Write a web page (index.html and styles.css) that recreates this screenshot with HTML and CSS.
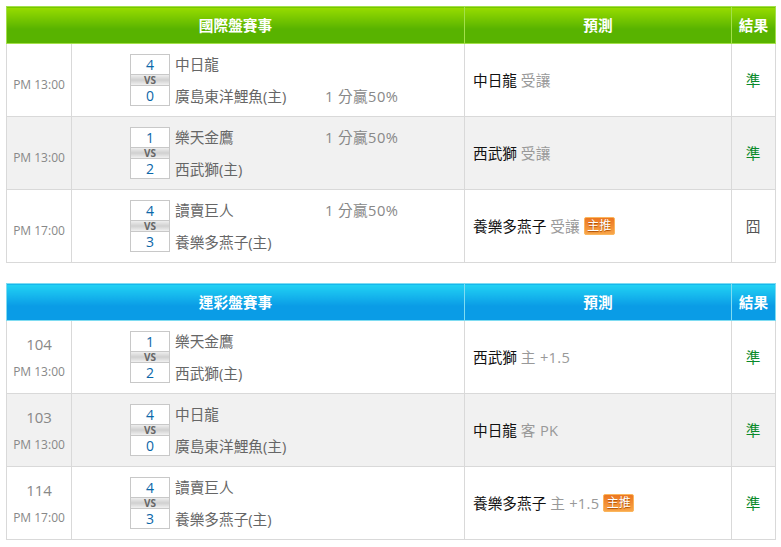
FILE: index.html
```html
<!DOCTYPE html>
<html lang="zh-Hant">
<head>
<meta charset="utf-8">
<title>賽事預測</title>
<link rel="stylesheet" href="styles.css">
</head>
<body>
<table class="board green">
<colgroup><col class="c-time"><col class="c-match"><col class="c-pick"><col class="c-result"></colgroup>
<thead><tr><th colspan="2">國際盤賽事</th><th>預測</th><th>結果</th></tr></thead>
<tbody>
<tr>
<td class="time"><div class="clock">PM 13:00</div></td>
<td><div class="match"><div class="score"><span class="num">4</span><span class="vs">VS</span><span class="num">0</span></div>
<div class="teams"><div class="team"><span class="name">中日龍</span></div><div class="team"><span class="name">廣島東洋鯉魚(主)</span><span class="odds">1 分贏50%</span></div></div></div></td>
<td class="pick"><b>中日龍</b> <i>受讓</i></td>
<td class="res ok">準</td>
</tr>
<tr class="alt">
<td class="time"><div class="clock">PM 13:00</div></td>
<td><div class="match"><div class="score"><span class="num">1</span><span class="vs">VS</span><span class="num">2</span></div>
<div class="teams"><div class="team"><span class="name">樂天金鷹</span><span class="odds">1 分贏50%</span></div><div class="team"><span class="name">西武獅(主)</span></div></div></div></td>
<td class="pick"><b>西武獅</b> <i>受讓</i></td>
<td class="res ok">準</td>
</tr>
<tr>
<td class="time"><div class="clock">PM 17:00</div></td>
<td><div class="match"><div class="score"><span class="num">4</span><span class="vs">VS</span><span class="num">3</span></div>
<div class="teams"><div class="team"><span class="name">讀賣巨人</span><span class="odds">1 分贏50%</span></div><div class="team"><span class="name">養樂多燕子(主)</span></div></div></div></td>
<td class="pick"><b>養樂多燕子</b> <i>受讓</i> <span class="tag">主推</span></td>
<td class="res">囧</td>
</tr>
</tbody>
</table>
<table class="board blue">
<colgroup><col class="c-time"><col class="c-match"><col class="c-pick"><col class="c-result"></colgroup>
<thead><tr><th colspan="2">運彩盤賽事</th><th>預測</th><th>結果</th></tr></thead>
<tbody>
<tr>
<td class="time"><div class="no">104</div><div class="clock">PM 13:00</div></td>
<td><div class="match"><div class="score"><span class="num">1</span><span class="vs">VS</span><span class="num">2</span></div>
<div class="teams"><div class="team"><span class="name">樂天金鷹</span></div><div class="team"><span class="name">西武獅(主)</span></div></div></div></td>
<td class="pick"><b>西武獅</b> <i>主 +1.5</i></td>
<td class="res ok">準</td>
</tr>
<tr class="alt">
<td class="time"><div class="no">103</div><div class="clock">PM 13:00</div></td>
<td><div class="match"><div class="score"><span class="num">4</span><span class="vs">VS</span><span class="num">0</span></div>
<div class="teams"><div class="team"><span class="name">中日龍</span></div><div class="team"><span class="name">廣島東洋鯉魚(主)</span></div></div></div></td>
<td class="pick"><b>中日龍</b> <i>客 PK</i></td>
<td class="res ok">準</td>
</tr>
<tr>
<td class="time"><div class="no">114</div><div class="clock">PM 17:00</div></td>
<td><div class="match"><div class="score"><span class="num">4</span><span class="vs">VS</span><span class="num">3</span></div>
<div class="teams"><div class="team"><span class="name">讀賣巨人</span></div><div class="team"><span class="name">養樂多燕子(主)</span></div></div></div></td>
<td class="pick"><b>養樂多燕子</b> <i>主 +1.5</i> <span class="tag">主推</span></td>
<td class="res ok">準</td>
</tr>
</tbody>
</table>
</body>
</html>
```
FILE: styles.css
```css
html, body { margin: 0; padding: 0; background: #fff; }
body {
  padding: 6px 6px 0 6px;
  font-family: "Open Sans", "Noto Sans CJK TC", sans-serif;
  font-size: 14.67px;
  color: #666;
}
.board {
  width: 769px;
  border-collapse: collapse;
  table-layout: fixed;
  margin-bottom: 20px;
}
.c-time { width: 65px; }
.c-match { width: 393px; }
.c-pick { width: 267px; }
.c-result { width: 44px; }
.board th, .board td { box-sizing: border-box; }
.board th {
  height: 37px;
  padding: 0 0 2px;
  color: #fff;
  font-size: 14.67px;
  font-weight: bold;
  font-family: "Noto Sans CJK TC", sans-serif;
  text-align: center;
}
.green th {
  background: linear-gradient(#98dc00, #58b300 60%);
  border: 1px solid #a3e04a;
}
.blue th {
  background: linear-gradient(#22d3f4, #0a9ce6 60%);
  border: 1px solid #7fdcf2;
}
.board td {
  height: 73px;
  padding: 0;
  border: 1px solid #d9d9d9;
  vertical-align: middle;
}
.alt td { background: #f1f1f1; }
.time { text-align: center; color: #888; }
.clock { font-size: 12px; line-height: 16px; margin-top: 10px; }
.no { font-size: 15px; line-height: 20px; }
.match { display: flex; padding-left: 58px; gap: 5px; align-items: center; }
.score {
  display: flex;
  flex-direction: column;
  width: 38px;
  border: 1px solid #c8c8c8;
  background: #fff;
  text-align: center;
}
.num {
  box-sizing: border-box;
  height: 19px;
  padding-top: 1px;
  line-height: 18px;
  color: #0b66a8;
  font-size: 14px;
}
.vs {
  height: 10px;
  line-height: 10px;
  font-size: 10px;
  font-weight: bold;
  color: #666;
  background: linear-gradient(#eee, #d0d0d0 50%, #f0f0f0);
  border-top: 1px solid #c8c8c8;
  border-bottom: 1px solid #c8c8c8;
}
.teams { display: flex; flex-direction: column; gap: 12px; }
.team { display: flex; height: 20px; line-height: 20px; }
.name { width: 150px; }
.odds { color: #888; letter-spacing: 0.4px; }
.pick { padding-left: 8px !important; padding-bottom: 2px !important; }
.pick b { font-weight: normal; color: #111; }
.pick i { font-style: normal; color: #999; letter-spacing: 0.3px; }
.tag {
  display: inline-block;
  vertical-align: 2px;
  height: 16px;
  padding: 0 2.5px;
  line-height: 15px;
  font-size: 12px;
  color: #fff;
  text-shadow: 0 1px 1px #a84a00;
  border-radius: 2px;
  background: linear-gradient(#ec7620, #f8a548);
  border: 1px solid #fbb65c;
}
.res { text-align: center; color: #555; padding: 0 1px 2px 0 !important; }
.ok { color: #0a8a2a; }
```
